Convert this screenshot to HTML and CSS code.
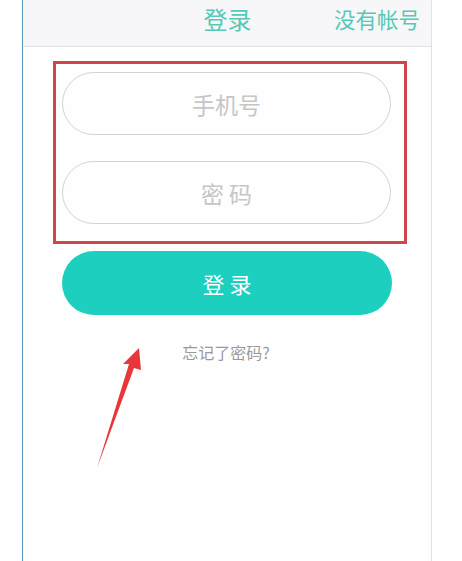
FILE: index.html
```html
<!DOCTYPE html>
<html lang="zh">
<head>
<meta charset="utf-8">
<title>登录</title>
<link rel="stylesheet" href="styles.css">
</head>
<body>
<div class="phone">
  <header class="topbar">
    <span class="spacer"></span>
    <span class="title">登录</span>
    <span class="signup">没有帐号</span>
  </header>
  <main class="content">
    <div class="form-box">
      <div class="field">手机号</div>
      <div class="field">密 码</div>
    </div>
    <button class="login-btn">登 录</button>
    <p class="forgot">忘记了密码?</p>
  </main>
  <svg class="arrow" width="60" height="130" viewBox="0 0 60 130">
    <polygon points="43,2 27,18 33,18 1,122 38,22 45,24" fill="#e8363a"/>
  </svg>
</div>
</body>
</html>
```

FILE: styles.css
```css
html, body {
  margin: 0;
  padding: 0;
  background: #ffffff;
}
body {
  font-family: "Noto Sans CJK SC", "Noto Sans", sans-serif;
}
.phone {
  position: relative;
  margin-left: 22px;
  width: 408px;
  height: 561px;
  border-left: 1px solid #5b93bb;
  border-right: 1px solid #d9e4ee;
  background: #fefefe;
}
.topbar {
  display: grid;
  grid-template-columns: 1fr auto 1fr;
  align-items: center;
  height: 46px;
  background: #f7f7f9;
  border-bottom: 1px solid #dde0e3;
}
.title {
  font-size: 24px;
  color: #55c9b5;
  line-height: 1;
  padding: 0 0 8px 1px;
}
.signup {
  justify-self: end;
  font-size: 21.5px;
  color: #55c9b5;
  line-height: 1;
  padding: 0 11px 8px 0;
}
.content {
  display: flex;
  flex-direction: column;
  align-items: flex-start;
}
.form-box {
  margin: 14px 0 0 30px;
  width: 342px;
  border: 3px solid #cf464a;
  padding: 8px 0 17px 6px;
  display: flex;
  flex-direction: column;
  gap: 26px;
}
.field {
  width: 327px;
  height: 61px;
  border: 1px solid #d2d2d2;
  border-radius: 32px;
  display: flex;
  align-items: center;
  justify-content: center;
  font-size: 23px;
  color: #c6c6c6;
  white-space: pre;
}
.login-btn {
  margin: 7px 0 0 39px;
  width: 330px;
  height: 64px;
  border: none;
  border-radius: 32px;
  background: #1ccfbf;
  color: #ffffff;
  font-family: "Noto Sans CJK SC", "Noto Sans", sans-serif;
  font-size: 22px;
  padding: 0;
}
.forgot {
  align-self: stretch;
  text-align: center;
  margin: 27px 0 0 0;
  font-size: 16px;
  line-height: 21px;
  color: #999999;
  padding-right: 2px;
}
.arrow {
  position: absolute;
  left: 73px;
  top: 346px;
}
```
